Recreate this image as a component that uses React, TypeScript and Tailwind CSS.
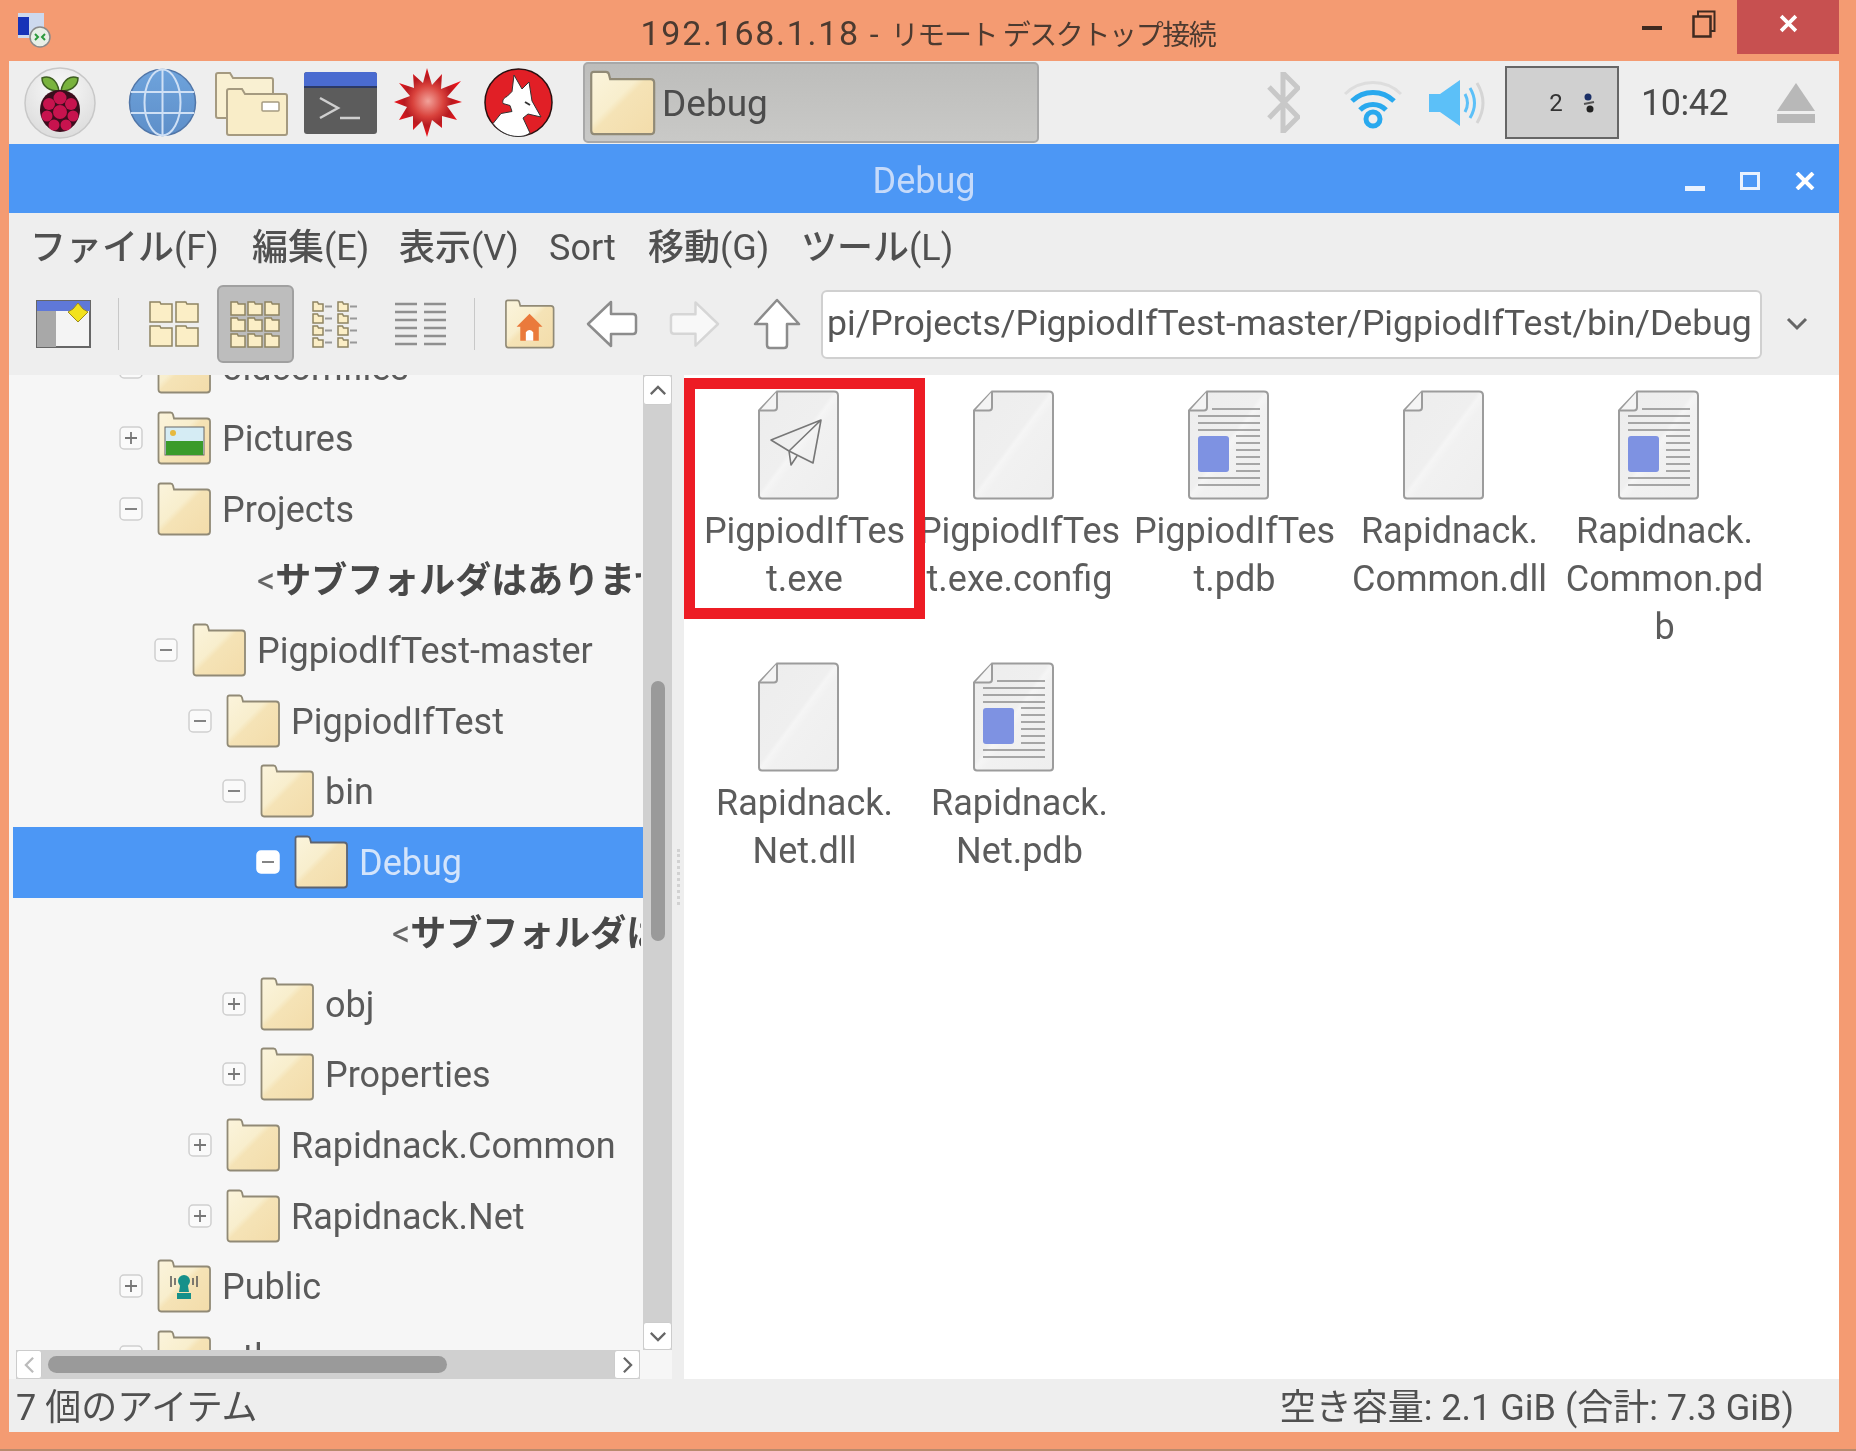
import React from "react";

const Folder = ({ className = "", id, children, dark }: { className?: string; id: string; children?: React.ReactNode; dark?: boolean }) => (
  <svg viewBox="0 0 55 54" className={className}>
    <defs>
      <linearGradient id={id} x1="0" y1="0" x2="1" y2="1">
        <stop offset="0" stopColor="#fbf4dc" />
        <stop offset="0.42" stopColor="#f8eecd" />
        <stop offset="0.5" stopColor="#f5e3b6" />
        <stop offset="1" stopColor="#f3dcaa" />
      </linearGradient>
    </defs>
    <path
      d="M1.500 3.500q0-2 2-2h10q2 0 2.500 2l1 4h33q3 0 3 3v39q0 3-3 3h-46q-2.500 0-2.500-3z"
      fill={`url(#${id})`}
      stroke={dark ? "#5d6472" : "#918a76"}
      strokeWidth="1.800"
    />
    {children}
  </svg>
);

const FileIcon = ({ id, kind }: { id: string; kind: "plain" | "exe" | "doc" }) => (
  <svg viewBox="0 0 82 110" className="w-[82px] h-[110px] mr-[12px] shrink-0">
    <defs>
      <linearGradient id={id} x1="0" y1="0" x2="1" y2="1">
        <stop offset="0" stopColor="#ededed" />
        <stop offset="0.47" stopColor="#efefef" />
        <stop offset="0.5" stopColor="#f5f5f5" />
        <stop offset="0.56" stopColor="#f1f1f1" />
        <stop offset="1" stopColor="#eeeeee" />
      </linearGradient>
    </defs>
    <path d="M19 1.500h57q4 0 4 4v100q0 3-3 3h-73q-3 0-3-3v-85z" fill={`url(#${id})`} stroke="#9c9c9c" strokeWidth="2" />
    <path d="M19 1.500v16q0 3-3 3h-14" fill="#f4f4f4" stroke="#9c9c9c" strokeWidth="2" />
    {kind === "exe" && (
      <g fill="none" stroke="#777" strokeWidth="1.600" strokeLinejoin="round">
        <path d="M63 30L13 50l18 11zM63 30L55 73 31 61M31 61l2 14 6-9" />
      </g>
    )}
    {kind === "doc" && (
      <g stroke="#8d8d8d" strokeWidth="1.500">
        <path d="M24 19h48M10 26h62M10 33h62M10 40h62M48 46h24M48 53h24M48 60h24M48 67h24M48 74h24M48 81h24M10 88h62M10 95h62" />
        <rect x="10" y="46" width="31" height="36" rx="3" fill="#7e92e2" stroke="none" />
      </g>
    )}
  </svg>
);

const Expander = ({ open, selected }: { open: boolean; selected?: boolean }) => (
  <svg viewBox="0 0 24 24" className="w-[24px] h-[24px] shrink-0">
    <rect x="1" y="1" width="22" height="22" rx="4" fill={selected ? "#ffffff" : "#fafafa"} stroke={selected ? "#ffffff" : "#cfcfcf"} strokeWidth="1.500" />
    <path d={open ? "M6 12h12" : "M6 12h12M12 6v12"} stroke="#777" strokeWidth="1.800" />
  </svg>
);

const PicturesArt = () => (
  <g>
    <rect x="8" y="16" width="39" height="28" fill="#d5ecf4" stroke="#666" strokeWidth="1" />
    <rect x="9" y="30" width="37" height="14" fill="#3a9b2a" />
    <circle cx="16" cy="22" r="3" fill="#e6b93e" />
  </g>
);

const PublicArt = () => (
  <g fill="#16908a">
    <circle cx="27" cy="22" r="6" />
    <path d="M23 27h8l1 6h-10zM20 34h14v6h-14z" />
    <path d="M14 17v11M18 19v7M36 19v7M40 17v11" stroke="#555" strokeWidth="1.500" />
  </g>
);

type Row = { label: string; pad: string; open?: boolean; art?: "pictures" | "public"; selected?: boolean; note?: boolean };

const rows: Row[] = [
  { label: "oldcomfiles", pad: "pl-[106px]", open: true },
  { label: "Pictures", pad: "pl-[106px]", open: false, art: "pictures" },
  { label: "Projects", pad: "pl-[106px]", open: true },
  { label: "サブフォルダはありません>", pad: "pl-[244px]", note: true },
  { label: "PigpiodIfTest-master", pad: "pl-[141px]", open: true },
  { label: "PigpiodIfTest", pad: "pl-[175px]", open: true },
  { label: "bin", pad: "pl-[209px]", open: true },
  { label: "Debug", pad: "pl-[243px]", open: true, selected: true },
  { label: "サブフォルダはありません>", pad: "pl-[379px]", note: true },
  { label: "obj", pad: "pl-[209px]", open: false },
  { label: "Properties", pad: "pl-[209px]", open: false },
  { label: "Rapidnack.Common", pad: "pl-[175px]", open: false },
  { label: "Rapidnack.Net", pad: "pl-[175px]", open: false },
  { label: "Public", pad: "pl-[106px]", open: false, art: "public" },
  { label: "other", pad: "pl-[106px]", open: true },
];

const files: { lines: string[]; kind: "plain" | "exe" | "doc" }[] = [
  { lines: ["PigpiodIfTes", "t.exe"], kind: "exe" },
  { lines: ["PigpiodIfTes", "t.exe.config"], kind: "plain" },
  { lines: ["PigpiodIfTes", "t.pdb"], kind: "doc" },
  { lines: ["Rapidnack.", "Common.dll"], kind: "plain" },
  { lines: ["Rapidnack.", "Common.pd", "b"], kind: "doc" },
  { lines: ["Rapidnack.", "Net.dll"], kind: "plain" },
  { lines: ["Rapidnack.", "Net.pdb"], kind: "doc" },
];

const FolderGrid = ({ cols, rowsN, w, h, gap, dash }: { cols: number; rowsN: number; w: number; h: number; gap: number; dash?: boolean }) => {
  const cells = [];
  const cellW = dash ? w * 2 + 2 : w;
  for (let r = 0; r < rowsN; r++)
    for (let c = 0; c < cols; c++) {
      const x = c * (cellW + gap) + 1;
      const y = r * (h + gap) + 1;
      cells.push(
        <g key={`${r}-${c}`}>
          <path
            d={`M${x} ${y}h${w * 0.45}l1 2h${w * 0.55 - 1}v${h - 2}h${-w}z`}
            fill="#fbeec6"
            stroke="#8f8462"
            strokeWidth="1.500"
          />
          {dash && <path d={`M${x + w + 2} ${y + h / 2}h${w - 3}`} stroke="#999" strokeWidth="2" />}
        </g>
      );
    }
  return cells;
};

export default function App() {
  return (
    <div
      className="w-[1856px] h-[1451px] bg-[#f49b72] flex flex-col overflow-hidden text-[#5a5a5a] blur-[0.7px]"
      style={{ fontFamily: "Roboto, 'Noto Sans CJK JP', sans-serif" }}
    >
      {/* RDP title bar */}
      <div className="h-[61px] shrink-0 relative flex items-center justify-center">
        <svg viewBox="0 0 36 36" className="absolute left-[16px] top-[12px] w-[36px] h-[36px]">
          <rect x="2" y="1" width="26" height="25" fill="#cdd9ee" />
          <rect x="2" y="5" width="11" height="18" fill="#1733b8" />
          <circle cx="24" cy="25" r="10" fill="#e8efe6" stroke="#8a8a8a" strokeWidth="1.500" />
          <path d="M19 22l3 3-3 3M29 22l-3 3 3 3" stroke="#2c9a3c" strokeWidth="2" fill="none" />
        </svg>
        <div className="pt-[5px] text-[#4b3a30] whitespace-nowrap flex items-baseline">
          <span className="text-[34px] tracking-[1.700px]">192.168.1.18</span>
          <span className="text-[32px] ml-[10px]">-</span>
          <span className="text-[28px] tracking-[-1.400px] ml-[12px]">リモート デスクトップ接続</span>
        </div>
        <div className="absolute right-[17px] top-0 h-[54px] flex items-start">
          <svg viewBox="0 0 20 6" className="w-[20px] h-[6px] mt-[25px] mr-[30px]"><rect width="20" height="4" y="1" fill="#3f2a20" /></svg>
          <svg viewBox="0 0 24 28" className="w-[24px] h-[28px] mt-[10px] mr-[21px]">
            <rect x="1.500" y="6.500" width="17" height="20" fill="none" stroke="#3f2a20" strokeWidth="2.500" />
            <path d="M6 6V1.500h16.500V21H19" fill="none" stroke="#3f2a20" strokeWidth="2" />
          </svg>
          <div className="w-[102px] h-[54px] bg-[#c75050] flex items-center justify-center">
            <svg viewBox="0 0 18 18" className="w-[19px] h-[19px] mb-[8px]"><path d="M2 2l14 14M16 2L2 16" stroke="#fff" strokeWidth="3.500" /></svg>
          </div>
        </div>
      </div>

      <div className="flex-1 ml-[9px] mr-[17px] flex flex-col min-h-0 bg-[#eeeeee]">
        {/* Pi panel */}
        <div className="h-[83px] shrink-0 flex items-center bg-[#eeeeee]">
          <svg viewBox="0 0 72 72" className="w-[72px] h-[72px] ml-[15px] shrink-0">
            <defs>
              <radialGradient id="rasp" cx="0.5" cy="0.3" r="0.8">
                <stop offset="0" stopColor="#fafafa" />
                <stop offset="1" stopColor="#d8d8d8" />
              </radialGradient>
            </defs>
            <circle cx="36" cy="36" r="35" fill="url(#rasp)" stroke="#c8c8c8" strokeWidth="1.500" />
            <path d="M35 24C26 24 18 20 18 11c7-3 15 1 17 13z" fill="#79b33d" stroke="#3e5d22" strokeWidth="1.500" />
            <path d="M37 24c9 0 17-4 17-13-7-3-15 1-17 13z" fill="#79b33d" stroke="#3e5d22" strokeWidth="1.500" />
            <path d="M36 23c12 0 20 8 20 20 0 11-9 22-20 22S16 54 16 43c0-12 8-20 20-20z" fill="#3d0d1d" />
            <g fill="#c7134e">
              <circle cx="36" cy="31" r="6.500" /><circle cx="25" cy="37" r="6" /><circle cx="47" cy="37" r="6" />
              <circle cx="36" cy="45" r="7" /><circle cx="23" cy="49" r="5.500" /><circle cx="49" cy="49" r="5.500" />
              <circle cx="30" cy="58" r="5.500" /><circle cx="42" cy="58" r="5.500" />
            </g>
          </svg>
          <svg viewBox="0 0 69 69" className="w-[69px] h-[69px] ml-[32px] shrink-0">
            <defs>
              <linearGradient id="globe" x1="0" y1="0" x2="0" y2="1">
                <stop offset="0" stopColor="#6ea3dc" />
                <stop offset="1" stopColor="#5e8fc9" />
              </linearGradient>
            </defs>
            <circle cx="34.500" cy="34.500" r="33" fill="url(#globe)" stroke="#5176a8" strokeWidth="1.500" />
            <g stroke="#cfe0f5" strokeWidth="2" fill="none">
              <path d="M34.500 2v65M3 24h63M3 45h63" />
              <ellipse cx="34.500" cy="34.500" rx="18" ry="33" />
            </g>
          </svg>
          <svg viewBox="0 0 74 66" className="w-[74px] h-[66px] ml-[17px] shrink-0">
            <path d="M2 5q0-2 2-2h12l3 5h38q2 0 2 2v36q0 2-2 2H4q-2 0-2-2z" fill="#f9f0d2" stroke="#a59a80" strokeWidth="2" />
            <path d="M13 21q0-2 2-2h13l3 5h40q2 0 2 2v37q0 2-2 2H15q-2 0-2-2z" fill="#f9edc8" stroke="#a59a80" strokeWidth="2" />
            <rect x="48" y="32" width="17" height="9" rx="1" fill="#fff" stroke="#a59a80" strokeWidth="1.500" />
          </svg>
          <svg viewBox="0 0 73 62" className="w-[73px] h-[62px] ml-[16px] shrink-0">
            <rect width="73" height="62" rx="3" fill="#5c5c5c" />
            <path d="M0 3q0-3 3-3h67q3 0 3 3v11H0z" fill="#4a6bd0" />
            <rect y="14" width="73" height="2" fill="#2c3a66" />
            <path d="M16 26l18 10-18 10M36 46h20" fill="none" stroke="#cfcfcf" strokeWidth="2.500" />
          </svg>
          <svg viewBox="0 0 68 69" className="w-[68px] h-[69px] ml-[17px] shrink-0">
            <defs>
              <radialGradient id="star" cx="0.5" cy="0.48" r="0.5">
                <stop offset="0" stopColor="#f2a29a" />
                <stop offset="0.45" stopColor="#d9423c" />
                <stop offset="0.7" stopColor="#b81a20" />
                <stop offset="1" stopColor="#ee141b" />
              </radialGradient>
            </defs>
            <path
              d="M33 0l5 17 10-11-1 15 20-8-14 16 15 5-15 4 10 14-15-4 0 12-10-8-5 17-5-16-9 9 0-14-14 4 8-13L0 34l16-6-11-13 15 5-1-14 10 9z"
              fill="url(#star)"
            />
          </svg>
          <svg viewBox="0 0 69 69" className="w-[69px] h-[69px] ml-[22px] shrink-0">
            <circle cx="34.500" cy="34.500" r="33.500" fill="#e11f26" stroke="#2a1010" strokeWidth="1.500" />
            <path d="M30 7l8 14 7-7 3 19 9 16-13-3-5 4 7 15c-4 3-8 3.500-12 3.500-10 0-19-5-25-13l8-10 11-2-2-6-7-2c-1-3 1-6 4-7l5-5z" fill="#ffffff" stroke="#333" strokeWidth="1" />
            <path d="M41 34l5 3" stroke="#333" strokeWidth="2" />
          </svg>
          <div className="ml-[30px] w-[456px] h-[81px] shrink-0 rounded-[5px] bg-gradient-to-b from-[#bdbdbb] to-[#c9c9c7] border-2 border-[#a8a8a8] flex items-center">
            <Folder id="ftask" className="w-[72px] h-[66px] ml-[2px] shrink-0" />
            <span className="text-[37px] ml-[3px] mt-[3px] text-[#4c4c4c]">Debug</span>
          </div>
          <svg viewBox="0 0 33 61" className="w-[33px] h-[61px] ml-[228px] shrink-0">
            <path d="M2 15l29 30-15 15V1l15 15L2 46" fill="none" stroke="#c8c8c8" strokeWidth="5" />
          </svg>
          <svg viewBox="0 0 58 54" className="w-[58px] h-[54px] ml-[44px] shrink-0" fill="none">
            <path d="M1 18a40 40 0 0 1 56 0" stroke="#dddddd" strokeWidth="3" />
            <path d="M8 25a30 30 0 0 1 42 0" stroke="#29a9ee" strokeWidth="5" />
            <path d="M16 34a18 18 0 0 1 26 0" stroke="#29a9ee" strokeWidth="5" />
            <circle cx="29" cy="43" r="7" stroke="#29a9ee" strokeWidth="5" />
          </svg>
          <svg viewBox="0 0 59 46" className="w-[59px] h-[46px] ml-[27px] shrink-0" fill="none">
            <path d="M0 14h11L31 0v46L11 32H0z" fill="#5cc0f8" />
            <path d="M36 14q5 9 0 18" stroke="#5cc0f8" strokeWidth="3" />
            <path d="M41 8q9 15 0 30" stroke="#5cc0f8" strokeWidth="3" />
            <path d="M48 3q12 20 0 40" stroke="#d5d5d5" strokeWidth="3" />
          </svg>
          <div className="ml-[17px] w-[114px] h-[73px] shrink-0 bg-[#d0d0d0] border-2 border-[#666] flex items-center justify-center pl-[22px] gap-[18px] text-[24px] text-[#333]">
            <span>2</span>
            <svg viewBox="0 0 16 22" className="w-[16px] h-[22px]">
              <circle cx="7" cy="5" r="3.500" fill="#1b2f66" />
              <circle cx="9" cy="17" r="3.500" fill="#222" />
              <path d="M3 12l10-2" stroke="#555" strokeWidth="2" />
            </svg>
          </div>
          <span className="ml-[22px] w-[87px] shrink-0 text-[36px] text-[#4a4a4a] tracking-[-0.5px] whitespace-nowrap">10:42</span>
          <svg viewBox="0 0 38 40" className="w-[38px] h-[40px] ml-[49px] shrink-0">
            <path d="M19 0l19 28H0z" fill="#b8b8b8" />
            <rect y="31" width="38" height="9" fill="#b8b8b8" />
          </svg>
        </div>

        {/* Window title */}
        <div className="h-[69px] shrink-0 bg-[#4c97f5] relative flex items-center justify-center">
          <span className="text-[36px] text-[#c5dafa] pt-[4px]">Debug</span>
          <div className="absolute right-[24px] top-[28px] flex items-start">
            <svg viewBox="0 0 20 6" className="w-[20px] h-[6px] mt-[14px] mr-[35px]"><rect width="20" height="5" fill="#eaf2fe" /></svg>
            <svg viewBox="0 0 20 18" className="w-[20px] h-[18px] mr-[35px]"><rect x="1.500" y="1.500" width="17" height="15" fill="none" stroke="#eaf2fe" strokeWidth="3" /></svg>
            <svg viewBox="0 0 20 18" className="w-[20px] h-[18px]"><path d="M2 1l16 16M18 1L2 17" stroke="#fff" strokeWidth="4" /></svg>
          </div>
        </div>

        {/* Menu */}
        <div className="h-[70px] shrink-0 flex items-center text-[36px] text-[#505050] whitespace-nowrap">
          <span className="ml-[21px] w-[222px]"><span className="font-medium">ファイル</span>(F)</span>
          <span className="w-[147px]"><span className="font-medium">編集</span>(E)</span>
          <span className="w-[150px]"><span className="font-medium">表示</span>(V)</span>
          <span className="w-[99px]">Sort</span>
          <span className="w-[153px]"><span className="font-medium">移動</span>(G)</span>
          <span><span className="font-medium">ツール</span>(L)</span>
        </div>

        {/* Toolbar */}
        <div className="h-[92px] shrink-0 flex items-center pb-[10px]">
          <svg viewBox="0 0 55 48" className="w-[55px] h-[48px] ml-[27px] shrink-0">
            <rect x="1" y="1" width="53" height="46" fill="#f4f4f4" stroke="#666" strokeWidth="2" />
            <rect x="1" y="1" width="53" height="10" fill="#5f78d8" />
            <rect x="1" y="11" width="19" height="36" fill="#a8a8a8" />
            <path d="M42 3l5 6 5 3-5 5-5 5-5-5-5-5 5-3z" fill="#f2e21d" stroke="#9a8a22" />
          </svg>
          <div className="w-px h-[52px] bg-[#c8c8c8] ml-[27px] shrink-0" />
          <svg viewBox="0 0 50 47" className="w-[50px] h-[47px] ml-[30px] shrink-0">
            <FolderGrid cols={2} rowsN={2} w={22} h={20} gap={4} />
          </svg>
          <div className="ml-[18px] w-[77px] h-[78px] shrink-0 rounded-[6px] bg-[#bdbdbd] border-2 border-[#a0a0a0] flex items-center justify-center">
            <svg viewBox="0 0 51 47" className="w-[51px] h-[47px]">
              <FolderGrid cols={3} rowsN={3} w={14} h={13} gap={3} />
            </svg>
          </div>
          <svg viewBox="0 0 52 47" className="w-[52px] h-[47px] ml-[18px] shrink-0">
            <FolderGrid cols={2} rowsN={4} w={10} h={9} gap={3} dash />
          </svg>
          <svg viewBox="0 0 53 47" className="w-[53px] h-[47px] ml-[30px] shrink-0">
            <path d="M1 3h22M30 3h22M1 11h22M30 11h22M1 19h22M30 19h22M1 27h22M30 27h22M1 35h22M30 35h22M1 43h22M30 43h22" stroke="#8f8f8f" strokeWidth="2.500" />
          </svg>
          <div className="w-px h-[52px] bg-[#c8c8c8] ml-[27px] shrink-0" />
          <Folder id="fhome" className="w-[54px] h-[50px] ml-[28px] shrink-0">
            <path d="M27 16l14 14h-4v15H17V30h-4z" fill="#ea7a3c" />
            <path d="M23 45v-9q4-5 8 0v9z" fill="#fff" />
          </Folder>
          <svg viewBox="0 0 52 48" className="w-[52px] h-[48px] ml-[29px] shrink-0">
            <path d="M25 2L2 24l23 22V34h22q3 0 3-3V17q0-3-3-3H25z" fill="#fff" stroke="#8c8c8c" strokeWidth="2.500" strokeLinejoin="round" />
          </svg>
          <svg viewBox="0 0 52 48" className="w-[51px] h-[48px] ml-[31px] shrink-0">
            <path d="M27 2l23 22-23 22V34H5q-3 0-3-3V17q0-3 3-3h22z" fill="#f8f8f8" stroke="#d6d6d6" strokeWidth="2.500" strokeLinejoin="round" />
          </svg>
          <svg viewBox="0 0 48 52" className="w-[48px] h-[52px] ml-[33px] shrink-0">
            <path d="M24 2l22 24H34v21q0 3-3 3H17q-3 0-3-3V26H2z" fill="#fff" stroke="#8c8c8c" strokeWidth="2.500" strokeLinejoin="round" />
          </svg>
          <div className="ml-[20px] w-[941px] h-[69px] shrink-0 bg-white border-2 border-[#d0d0d0] rounded-[6px] flex items-center pl-[4px] overflow-hidden text-[35.600px] text-[#565656] whitespace-nowrap">
            pi/Projects/PigpiodIfTest-master/PigpiodIfTest/bin/Debug
          </div>
          <svg viewBox="0 0 22 14" className="w-[22px] h-[14px] ml-[24px] shrink-0">
            <path d="M2 2l9 9 9-9" fill="none" stroke="#666" strokeWidth="3" />
          </svg>
        </div>

        {/* Content */}
        <div className="h-[1004px] shrink-0 flex">
          <div className="w-[663px] shrink-0 flex flex-col bg-[#f6f6f6]">
            <div className="h-[975px] flex shrink-0">
              <div className="w-[630px] ml-[4px] shrink-0 overflow-hidden bg-[#f6f6f6]">
                <div className="-mt-[43px]">
                  {rows.map((r, i) => (
                    <div
                      key={i}
                      className={`h-[70.7px] flex items-center whitespace-nowrap text-[36px] ${r.pad} ${r.selected ? "bg-[#4c97f5] text-[#d3e4fb]" : ""} ${r.note ? "pr-[2px] text-[#484848]" : ""}`}
                    >
                      {r.note ? (
                        <span className="mt-[3px] min-w-0 overflow-hidden">
                          <span className="text-[#666]">&lt;</span>
                          <span className="font-bold">{r.label}</span>
                        </span>
                      ) : (
                        <>
                          <Expander open={!!r.open} selected={r.selected} />
                          <Folder id={`f${i}`} dark={r.selected} className="w-[55px] h-[54px] ml-[14px] shrink-0">
                            {r.art === "pictures" && <PicturesArt />}
                            {r.art === "public" && <PublicArt />}
                          </Folder>
                          <span className="ml-[10px] mt-[2px]">{r.label}</span>
                        </>
                      )}
                    </div>
                  ))}
                </div>
              </div>
              <div className="w-[29px] shrink-0 bg-[#d0d0d0] flex flex-col items-center">
                <div className="w-[29px] h-[30px] bg-white border border-[#cccccc] rounded-[3px] flex items-center justify-center">
                  <svg viewBox="0 0 20 12" className="w-[18px] h-[11px]"><path d="M2 10l8-8 8 8" fill="none" stroke="#666" strokeWidth="2.500" /></svg>
                </div>
                <div className="w-[14px] h-[260px] mt-[276px] rounded-full bg-[#9a9a9a]" />
                <div className="w-[29px] h-[28px] mt-auto bg-white border border-[#cccccc] rounded-[3px] flex items-center justify-center">
                  <svg viewBox="0 0 20 12" className="w-[18px] h-[11px]"><path d="M2 2l8 8 8-8" fill="none" stroke="#666" strokeWidth="2.500" /></svg>
                </div>
              </div>
            </div>
            <div className="h-[29px] shrink-0 ml-[7px] mr-[32px] bg-[#d0d0d0] flex items-center">
              <div className="w-[26px] h-[29px] bg-white border border-[#cccccc] rounded-[3px] flex items-center justify-center">
                <svg viewBox="0 0 12 20" className="w-[11px] h-[18px]"><path d="M10 2l-8 8 8 8" fill="none" stroke="#bbb" strokeWidth="2.500" /></svg>
              </div>
              <div className="w-[399px] h-[17px] ml-[6px] rounded-full bg-[#9a9a9a]" />
              <div className="w-[26px] h-[29px] ml-auto bg-white border border-[#cccccc] rounded-[3px] flex items-center justify-center">
                <svg viewBox="0 0 12 20" className="w-[11px] h-[18px]"><path d="M2 2l8 8-8 8" fill="none" stroke="#666" strokeWidth="2.500" /></svg>
              </div>
            </div>
          </div>
          <div className="w-[12px] shrink-0 flex flex-col items-center justify-start">
            <div className="mt-[474px] h-[56px] border-l-[3px] border-dotted border-[#d2d2d2]" />
          </div>
          <div className="flex-1 bg-white relative pl-[13px] pt-[15px]">
            <div className="grid grid-cols-[repeat(5,215px)] auto-rows-[272px]">
              {files.map((f, i) => (
                <div key={i} className="flex flex-col items-center">
                  <FileIcon id={`file${i}`} kind={f.kind} />
                  <div className="mt-[7px] text-[36px] leading-[48px] text-center whitespace-nowrap text-[#5c5c5c]">
                    {f.lines.map((l, j) => (
                      <div key={j}>{l}</div>
                    ))}
                  </div>
                </div>
              ))}
            </div>
            <div className="absolute left-0 top-[3px] w-[241px] h-[241px] border-[11px] border-[#ed1c24]" />
          </div>
        </div>

        {/* Status */}
        <div className="h-[53px] shrink-0 flex items-center justify-between pl-[7px] pr-[45px] pt-[4px] text-[36px] text-[#505050] whitespace-nowrap">
          <span>7 個のアイテム</span>
          <span>空き容量: 2.1 GiB (合計: 7.3 GiB)</span>
        </div>
      </div>
      <div className="h-[19px] shrink-0 border-b-2 border-[#b98a6d]" />
    </div>
  );
}
